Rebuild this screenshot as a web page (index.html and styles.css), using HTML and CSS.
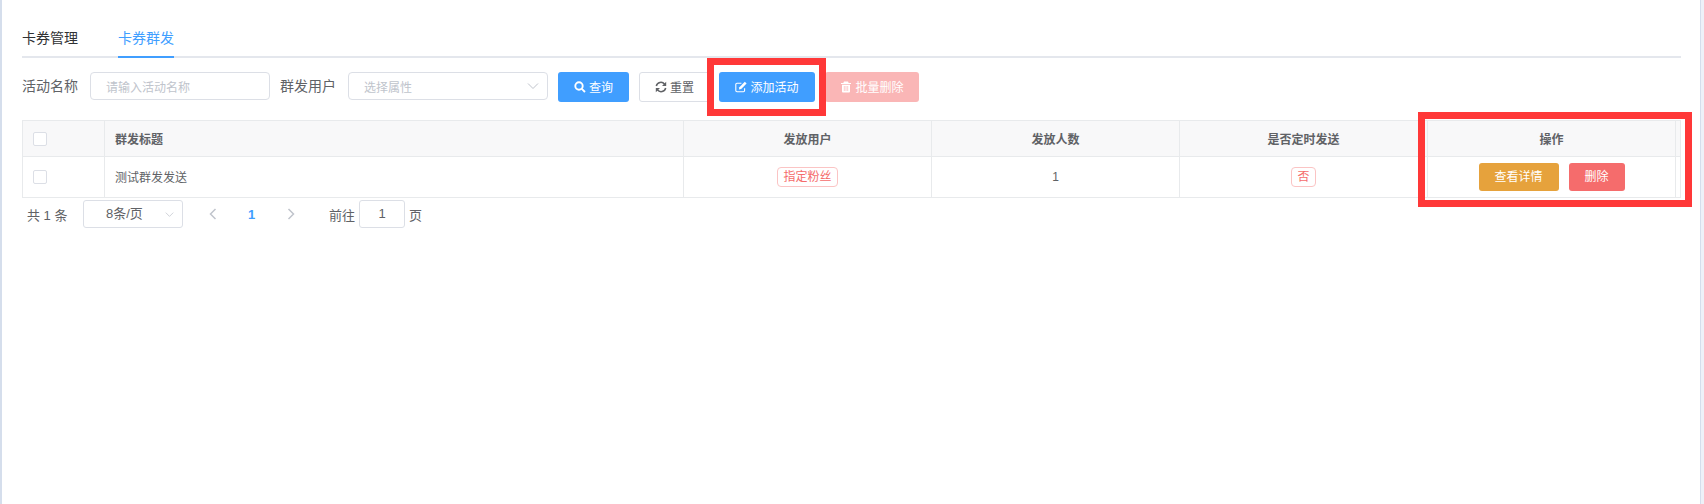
FILE: index.html
```html
<!DOCTYPE html>
<html lang="zh-CN">
<head>
<meta charset="utf-8">
<title>卡券群发</title>
<link rel="stylesheet" href="styles.css">
</head>
<body>
<main class="page">
  <nav class="tabs">
    <a class="tab">卡券管理</a>
    <a class="tab tab-active">卡券群发</a>
  </nav>
  <form class="filters">
    <label class="label">活动名称</label>
    <div class="field field-name"><span class="placeholder">请输入活动名称</span></div>
    <label class="label">群发用户</label>
    <div class="field field-user"><span class="placeholder">选择属性</span>
      <svg class="chev" viewBox="0 0 12 12"><path d="M1 3.5 L6 8.5 L11 3.5"/></svg>
    </div>
    <div class="btn btn-primary btn-search">
      <svg class="ico ico-search" viewBox="0 0 12 12"><circle cx="5" cy="5" r="3.7"/><path d="M7.8 7.8 L11 11"/></svg>查询
    </div>
    <div class="btn btn-plain">
      <svg class="ico" viewBox="0 0 12 12"><path d="M1.3 5 A4.7 4.7 0 0 1 9.6 3.2"/><path class="fill" d="M11.2 0.8 V5 H7 Z"/><path d="M10.7 7 A4.7 4.7 0 0 1 2.4 8.8"/><path class="fill" d="M0.8 11.2 V7 H5 Z"/></svg>重置
    </div>
    <div class="btn btn-primary btn-add">
      <svg class="ico ico-thin" viewBox="0 0 12 12"><path d="M9.6 7.2 V9.6 A1.2 1.2 0 0 1 8.4 10.8 H2 A1.2 1.2 0 0 1 0.8 9.6 V3.4 A1.2 1.2 0 0 1 2 2.2 H6.4"/><path class="fill" d="M9.8 0.8 L11.6 2.6 L6.2 8 L3.9 8.5 L4.4 6.2 Z"/></svg>添加活动
    </div>
    <div class="btn btn-disabled">
      <svg class="ico" viewBox="0 0 12 12"><path class="fill" d="M4 0.6 H8 L8.7 1.9 H11 V3.1 H1 V1.9 H3.3 Z M2 3.8 H10 V10.6 Q10 11.5 9.1 11.5 H2.9 Q2 11.5 2 10.6 Z"/><path class="rib" d="M4.3 5 V10 M6 5 V10 M7.7 5 V10"/></svg>批量删除
    </div>
  </form>
  <table class="grid">
    <colgroup>
      <col class="c-check"><col class="c-title"><col class="c-mid"><col class="c-mid"><col class="c-mid"><col class="c-mid"><col class="c-gutter">
    </colgroup>
    <thead>
      <tr>
        <th><span class="check"></span></th>
        <th class="left">群发标题</th>
        <th>发放用户</th>
        <th>发放人数</th>
        <th>是否定时发送</th>
        <th>操作</th>
        <th></th>
      </tr>
    </thead>
    <tbody>
      <tr>
        <td><span class="check"></span></td>
        <td class="left">测试群发发送</td>
        <td><span class="tag">指定粉丝</span></td>
        <td class="num">1</td>
        <td><span class="tag">否</span></td>
        <td class="ops"><span class="mini mini-warn">查看详情</span><span class="mini mini-danger">删除</span></td>
      </tr>
    </tbody>
  </table>
  <div class="pager">
    <span class="total">共 1 条</span>
    <div class="size">8条/页
      <svg class="chev chev-small" viewBox="0 0 12 12"><path d="M1 3.5 L6 8.5 L11 3.5"/></svg>
    </div>
    <svg class="arrow arrow-prev" viewBox="0 0 8 12"><path d="M6.5 1 L1.5 6 L6.5 11"/></svg>
    <span class="current">1</span>
    <svg class="arrow arrow-next" viewBox="0 0 8 12"><path d="M1.5 1 L6.5 6 L1.5 11"/></svg>
    <span class="goto">前往</span>
    <div class="jump">1</div>
    <span class="page-unit">页</span>
  </div>
  <div class="mark mark-add"></div>
  <div class="mark mark-ops"></div>
</main>
</body>
</html>
```
FILE: styles.css
```css
* { box-sizing: border-box; }
html, body { margin: 0; height: 504px; overflow: hidden; background: #eef1f8; }
body { font-family: "Liberation Sans", "Noto Sans CJK SC", sans-serif; font-size: 12px; color: #606266; }
.page { position: relative; height: 504px; margin-right: 3px; padding: 24px 19px 0 20px; background: #fff; border-left: 2px solid #d5deec; border-right: 1px solid #d5deec; }

.tabs { display: flex; gap: 40px; height: 34px; border-bottom: 2px solid #e4e7ed; }
.tab { font-size: 14px; line-height: 28px; height: 34px; color: #303133; }
.tab-active { color: #409eff; border-bottom: 2px solid #409eff; }

.filters { display: flex; align-items: flex-start; height: 30px; margin-top: 14px; }
.label { font-size: 14px; line-height: 28px; color: #606266; margin-right: 12px; }
.field { position: relative; display: flex; align-items: center; height: 28px; border: 1px solid #dcdfe6; border-radius: 4px; padding-left: 15px; margin-right: 10px; }
.field-name { width: 180px; }
.field-user { width: 200px; }
.placeholder { color: #c0c4cc; font-size: 12px; }
.chev { position: absolute; right: 8px; top: 7px; width: 12px; height: 12px; fill: none; stroke: #c0c4cc; stroke-width: 1; }
.btn { display: flex; align-items: center; justify-content: center; gap: 3px; height: 30px; padding-bottom: 1px; border-radius: 3px; font-size: 12px; border: 1px solid transparent; }
.ico { width: 12px; height: 12px; fill: none; stroke: currentColor; stroke-width: 1.5; }
.ico-search { stroke-width: 1.9; }
.ico-thin { stroke-width: 1.1; }
.ico .fill { fill: currentColor; stroke: none; }
.ico .rib { stroke: #fab6b6; stroke-width: 0.7; }
.btn-primary { background: #409eff; color: #fff; }
.btn-search { width: 71px; margin-right: 10px; }
.btn-plain { width: 71px; background: #fff; border-color: #dcdfe6; margin-right: 9px; }
.btn-add { width: 96px; margin-right: 10px; }
.btn-disabled { width: 94px; background: #fab6b6; color: #fff; }

.grid { width: 1658px; table-layout: fixed; border-collapse: collapse; margin-top: 18px; border: 1px solid #e8eaec; }
.c-check { width: 82px; }
.c-title { width: 579px; }
.c-mid { width: 248px; }
.c-gutter { width: 5px; }
.grid th, .grid td { border: 1px solid #e8eaec; text-align: center; padding: 0; font-size: 12px; color: #606266; }
.grid th { height: 36px; background: #f8f8f9; font-weight: 700; }
.grid td { height: 41px; }
.grid .left { text-align: left; padding-left: 10px; }
.grid tbody .left { padding-bottom: 2px; }
.grid tbody td:last-child { border-right: 1px solid #e8eaec; }
.check { display: block; width: 14px; height: 14px; margin-left: 10px; border: 1px solid #dcdfe6; border-radius: 2px; background: #fff; }
.tag { display: inline-block; height: 20px; line-height: 18px; padding: 0 5px; border: 1px solid #fbc4c4; border-radius: 4px; color: #f56c6c; background: #fff; }
.ops { font-size: 0; }
.mini { display: inline-block; height: 28px; line-height: 28px; border-radius: 3px; color: #fff; font-size: 12px; vertical-align: middle; }
.mini-warn { width: 80px; background: #e6a23c; margin-right: 10px; }
.mini-danger { width: 56px; background: #f56c6c; }

.pager { display: flex; align-items: center; height: 28px; margin-top: 2px; font-size: 13px; }
.total { margin-left: 5px; width: 56px; }
.size { position: relative; width: 100px; height: 28px; line-height: 26px; border: 1px solid #dcdfe6; border-radius: 3px; padding-left: 22px; }
.chev-small { right: 8px; top: 9px; width: 9px; height: 9px; }
.arrow { width: 8px; height: 12px; fill: none; stroke: #c0c4cc; stroke-width: 1.5; }
.arrow-prev { margin-left: 26px; }
.current { margin-left: 31px; width: 8px; color: #409eff; font-weight: 700; }
.arrow-next { margin-left: 31px; }
.goto { margin-left: 34px; }
.jump { width: 46px; height: 28px; line-height: 26px; margin: 0 4px; text-align: center; border: 1px solid #dcdfe6; border-radius: 3px; }

.mark { position: absolute; border: 7px solid #ff3838; }
.mark-add { left: 705px; top: 58px; width: 119px; height: 58px; }
.mark-ops { left: 1416px; top: 112px; width: 274px; height: 95px; }
```
